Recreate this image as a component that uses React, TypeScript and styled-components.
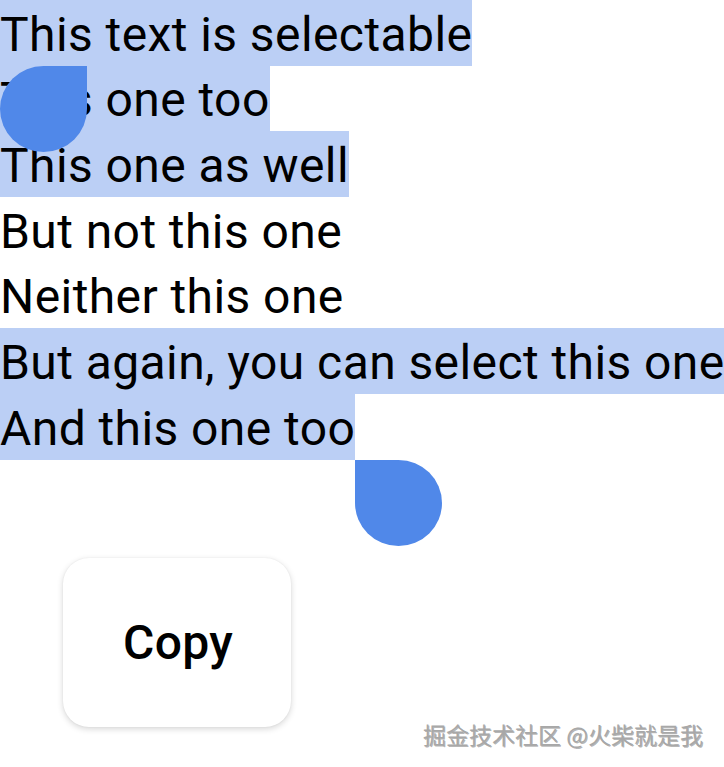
import * as React from "react";
import styled, { createGlobalStyle } from "styled-components";

const GlobalStyle = createGlobalStyle`
  html, body {
    margin: 0;
    padding: 0;
    background: #ffffff;
    overflow: hidden;
  }
  body {
    font-family: Roboto, "Noto Sans", sans-serif;
    color: #000000;
  }
`;

const SELECTION = "#bbcff5";
const HANDLE = "#5088e9";

const Screen = styled.div`
  position: relative;
  width: 724px;
  height: 767px;
  overflow: hidden;
  background: #ffffff;
`;

const TextColumn = styled.div`
  display: flex;
  flex-direction: column;
  align-items: flex-start;
`;

const Line = styled.div<{ $selected?: boolean; $fill?: boolean }>`
  position: relative;
  box-sizing: border-box;
  font-size: 48px;
  line-height: 65.7px;
  height: 65.7px;
  padding-top: 1.5px;
  white-space: nowrap;
  letter-spacing: 0.42px;
  background: ${p => (p.$selected ? SELECTION : "transparent")};
  ${p => (p.$fill ? "align-self: stretch;" : "")}
`;

const Handle = styled.div<{ $side: "start" | "end" }>`
  position: absolute;
  top: 100%;
  width: 87px;
  height: 86px;
  background: ${HANDLE};
  z-index: 2;
  ${p =>
    p.$side === "start"
      ? "left: 0; border-radius: 50% 0 50% 50%;"
      : "left: 100%; border-radius: 0 50% 50% 50%;"}
`;

const Toolbar = styled.div`
  display: flex;
  margin: 98px 0 0 63px;
`;

const ToolbarButton = styled.button`
  width: 228px;
  height: 169px;
  border: none;
  border-radius: 26px;
  background: #ffffff;
  box-shadow: 0 2px 6px rgba(0, 0, 0, 0.16), 0 0 2px rgba(0, 0, 0, 0.06);
  font-family: Roboto, sans-serif;
  font-weight: 500;
  font-size: 48px;
  letter-spacing: 0.3px;
  color: #000000;
  display: flex;
  align-items: center;
  justify-content: center;
  padding: 0 0 0 2px;
`;

const Watermark = styled.div`
  position: absolute;
  left: 423px;
  top: 719px;
  font-family: "Noto Sans CJK SC", "Noto Sans", sans-serif;
  font-size: 23px;
  font-weight: 400;
  line-height: 30px;
  color: #a8a8a8;
  text-shadow: 1px 1px 0 rgba(0, 0, 0, 0.3);
  white-space: nowrap;
`;

const lines: { text: string; selected: boolean; fill?: boolean }[] = [
  { text: "This text is selectable", selected: true },
  { text: "This one too", selected: true },
  { text: "This one as well", selected: true },
  { text: "But not this one", selected: false },
  { text: "Neither this one", selected: false },
  { text: "But again, you can select this one", selected: true, fill: true },
  { text: "And this one too", selected: true }
];

export default function App() {
  return (
    <>
      <GlobalStyle />
      <Screen>
        <TextColumn>
          {lines.map((l, i) => (
            <Line key={i} $selected={l.selected} $fill={l.fill}>
              {l.text}
              {i === 0 && <Handle $side="start" />}
              {i === lines.length - 1 && <Handle $side="end" />}
            </Line>
          ))}
        </TextColumn>
        <Toolbar>
          <ToolbarButton>Copy</ToolbarButton>
        </Toolbar>
        <Watermark>掘金技术社区 @火柴就是我</Watermark>
      </Screen>
    </>
  );
}
